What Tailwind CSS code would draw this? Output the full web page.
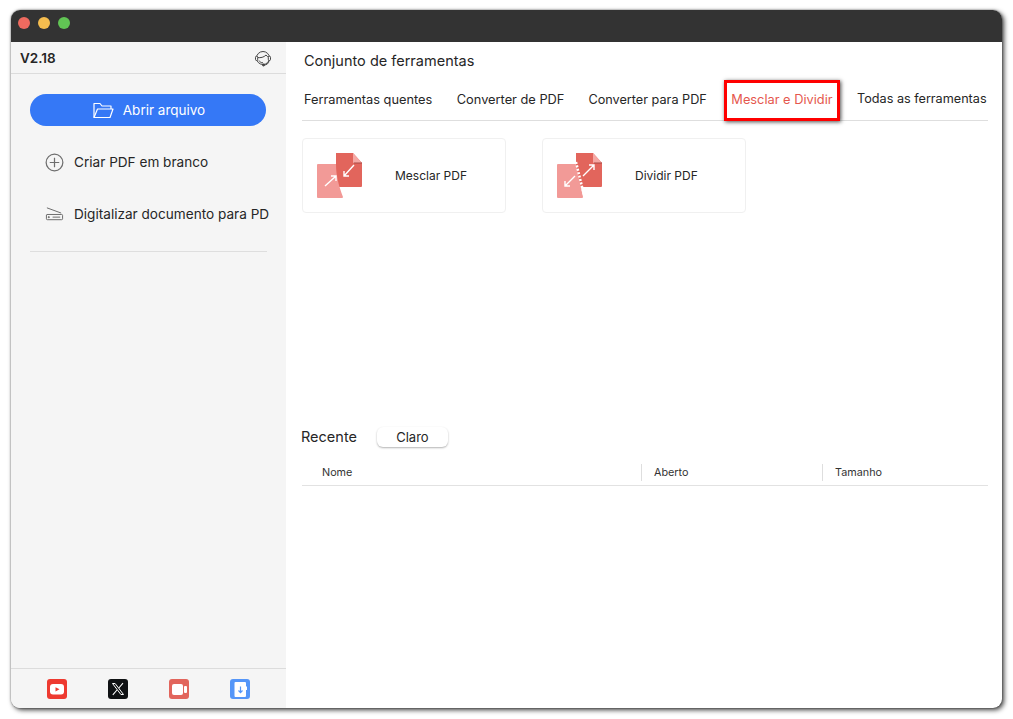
<!DOCTYPE html>
<html lang="pt">
<head>
<meta charset="utf-8">
<title>Conjunto de ferramentas</title>
<script src="https://cdn.jsdelivr.net/npm/@tailwindcss/browser@4"></script>
</head>
<body class="bg-white">
<div class="w-[1013px] h-[719px] pl-[11px] pt-[10px] overflow-hidden font-['Inter','Noto_Sans',sans-serif] text-[#262626]">
  <div class="relative w-[991px] h-[698px] rounded-[9px] bg-white flex flex-col overflow-hidden shadow-[2px_2px_5px_rgba(0,0,0,0.75),0_0_2px_rgba(0,0,0,0.5)]">
    <div class="h-[32px] shrink-0 bg-[#333333] flex items-center gap-[8px] pl-[7px] pb-[6px]">
      <span class="w-[12px] h-[12px] rounded-full bg-[#ee6a5f]"></span>
      <span class="w-[12px] h-[12px] rounded-full bg-[#f5bd4f]"></span>
      <span class="w-[12px] h-[12px] rounded-full bg-[#61c454]"></span>
    </div>
    <div class="flex flex-1 min-h-0">
      <aside class="w-[275px] shrink-0 bg-[#f5f5f5] flex flex-col">
        <div class="h-[32px] shrink-0 border-b border-[#dcdcdc] flex items-center justify-between pl-[9px] pr-[14px] pt-[1px]">
          <span class="text-[13.500px] font-semibold">V2.18</span>
          <svg class="w-[18px] h-[18px] -mt-[1px]" viewBox="0 0 18 18" fill="none" stroke="#444" stroke-width="1"><circle cx="9" cy="9" r="6.500"/><path d="M3.500 8.500c3 .6 6.500-.2 8.500-2.500 .8 1.200 1.800 2 3 2.300"/><path d="M5 11.500c.8 1.500 2.200 2.300 4 2.300"/><rect x="1.500" y="7.200" width="2.200" height="4.300" rx="1.100" fill="#f5f5f5"/><rect x="14.300" y="7.200" width="2.200" height="4.300" rx="1.100" fill="#f5f5f5"/><path d="M15 11.500c0 3-2.500 4.500-5 4.500"/><circle cx="9.500" cy="16" r="1" fill="#444"/></svg>
        </div>
        <div class="px-[19px] pt-[20px]">
          <button class="w-[236px] h-[32px] rounded-full bg-[#3578f6] text-white text-[13.500px] flex items-center justify-center gap-[9px] pl-[2px]">
            <svg class="w-[21px] h-[17px]" viewBox="0 0 21 17" fill="none" stroke="#fff" stroke-width="1.200" stroke-linejoin="round"><path d="M1 15.500V1.500h6l2 2.500h9v3"/><path d="M1 15.500l3.500-8.500H20l-3 8.500z"/></svg>
            <span class="pt-[1px]">Abrir arquivo</span>
          </button>
        </div>
        <div class="mt-[10px] pl-[34px] h-[52px] flex items-center gap-[10px] text-[13.600px]">
          <svg class="w-[19px] h-[19px] shrink-0" viewBox="0 0 20 20" fill="none" stroke="#6e6e6e" stroke-width="1.300"><circle cx="10" cy="10" r="8.800"/><path d="M10 5v10M5 10h10"/></svg>
          <span class="pt-[1px]">Criar PDF em branco</span>
        </div>
        <div class="pl-[34px] h-[52px] flex items-center gap-[10px] text-[13.600px] w-[258px] overflow-hidden whitespace-nowrap">
          <svg class="w-[19px] h-[16px] shrink-0" viewBox="0 0 20 16" fill="none" stroke="#666" stroke-width="1"><path d="M2 1.500l15 5.500"/><path d="M2 8.500h15.500a1 1 0 0 1 1 1V13a1 1 0 0 1-1 1H2.500a1 1 0 0 1-1-1V9a1 1 0 0 1 .5-.5z"/><path d="M8 11.300h8"/><circle cx="4" cy="11.300" r=".6" fill="#666"/></svg>
          <span class="pt-[1px]">Digitalizar documento para PDF</span>
        </div>
        <div class="mx-[19px] mt-[11px] w-[237px] border-t border-[#dedede]"></div>
        <div class="mt-auto h-[40px] border-t border-[#dcdcdc] flex items-start pl-[36px] gap-[41px] pt-[10px]">
          <span class="w-[20px] h-[20px] rounded-[3px] bg-[#ee3a30] flex items-center justify-center">
            <svg class="w-[14px] h-[11px]" viewBox="0 0 14 11"><rect width="14" height="10.500" rx="3" fill="#fff"/><path d="M5.500 3.200l4 2.100-4 2.100z" fill="#ee3a30"/></svg>
          </span>
          <span class="w-[20px] h-[20px] rounded-[3px] bg-[#101214] flex items-center justify-center">
            <svg class="w-[14px] h-[14px]" viewBox="0 0 14 14" fill="none" stroke="#fff"><path d="M1.500 1.500h2.600l8.400 11h-2.600z" stroke-width="1"/><path d="M12 1.200L7.800 6M6 8L1.800 12.800" stroke-width="1.100"/></svg>
          </span>
          <span class="w-[20px] h-[20px] rounded-[3px] bg-[#e2655c] flex items-center justify-center gap-[1px]">
            <span class="w-[11px] h-[11px] rounded-[2px] bg-white"></span>
            <span class="w-[3px] h-[7px] rounded-[1px] bg-white"></span>
          </span>
          <span class="w-[20px] h-[20px] rounded-[3px] bg-[#5596f8] flex items-center justify-center">
            <svg class="w-[13px] h-[15px]" viewBox="0 0 13 15"><path d="M1.500 0H11a1 1 0 0 1 1 1v3.500h1V8h-1v6a1 1 0 0 1-1 1H1.500a1 1 0 0 1-1-1V1a1 1 0 0 1 1-1z" fill="#fff"/><path d="M6.500 4.500v6M4.500 8.500l2 2.200 2-2.200" stroke="#5596f8" stroke-width="1.200" fill="none"/></svg>
          </span>
        </div>
      </aside>
      <main class="flex-1 min-w-0 flex flex-col pl-[16px] pr-[14px]">
        <div class="h-[37px] pl-[2px] flex items-center text-[14.500px]">Conjunto de ferramentas</div>
        <nav class="h-[42px] border-b border-[#dedede] flex items-start pt-[11px] pl-[2px] gap-[24.500px] text-[12.800px] whitespace-nowrap">
          <span>Ferramentas quentes</span>
          <span>Converter de PDF</span>
          <span class="-ml-[0.5px] text-[12.700px]">Converter para PDF</span>
          <span class="text-[#e5574d]">Mesclar e Dividir</span>
          <span class="text-[12.650px]">Todas as ferramentas</span>
        </nav>
        <div class="flex gap-[36px] pt-[17px]">
          <div class="w-[204px] h-[75px] rounded-[4px] border border-[#f0f0f0] flex items-center">
            <svg class="w-[46px] h-[46px] ml-[14px] shrink-0" viewBox="0 0 46 46"><path d="M19 0h17l9 10v23a1 1 0 0 1-1 1H20a1 1 0 0 1-1-1z" fill="#e2655c"/><path d="M36 0l9 10h-8a1 1 0 0 1-1-1z" fill="#f5a8a4"/><path d="M37 9.500h8v1h-8z" fill="#a84a44"/><path d="M1 11h18c0 12 3 22 7 33a1 1 0 0 1-1 1H1a1 1 0 0 1-1-1V12a1 1 0 0 1 1-1z" fill="#f29a97"/><path d="M37 12L27 23M27 18v5h5" stroke="#fff" stroke-width="1.400" fill="none"/><path d="M8 33L19 23M14 23h5v5" stroke="#fff" stroke-width="1.400" fill="none"/></svg>
            <span class="ml-[32px] text-[12px]">Mesclar PDF</span>
          </div>
          <div class="w-[204px] h-[75px] rounded-[4px] border border-[#f0f0f0] flex items-center">
            <svg class="w-[46px] h-[46px] ml-[14px] shrink-0" viewBox="0 0 46 46"><path d="M19 0h17l9 10v23a1 1 0 0 1-1 1H20a1 1 0 0 1-1-1z" fill="#e2655c"/><path d="M36 0l9 10h-8a1 1 0 0 1-1-1z" fill="#f5a8a4"/><path d="M37 9.500h8v1h-8z" fill="#a84a44"/><path d="M1 11h18l7 33a1 1 0 0 1-1 1H1a1 1 0 0 1-1-1V12a1 1 0 0 1 1-1z" fill="#f29a97"/><path d="M19 9l8 33" stroke="#fff" stroke-width="2.500" stroke-dasharray="2 1.500" fill="none"/><path d="M26 23L37 12M32 12h5v5" stroke="#fff" stroke-width="1.400" fill="none"/><path d="M18 23L8 33M8 28v5h5" stroke="#fff" stroke-width="1.400" fill="none"/></svg>
            <span class="ml-[32px] text-[12px]">Dividir PDF</span>
          </div>
        </div>
        <div class="flex items-center mt-[213px] h-[22px] -ml-px">
          <span class="text-[14.500px]">Recente</span>
          <button class="ml-[20px] w-[71px] h-[20px] rounded-[6px] bg-white text-[13px] pt-[1px] shadow-[0_1px_2px_rgba(0,0,0,0.3)]">Claro</button>
        </div>
        <div class="mt-[16px] h-[22px] border-b border-[#e2e2e2] flex items-start text-[10.800px] text-[#333]">
          <div class="w-[340px] h-[17px] pl-[20px] pt-[1px] flex items-center border-r border-[#dedede]">Nome</div>
          <div class="w-[181px] h-[17px] pl-[12px] pt-[1px] flex items-center border-r border-[#dedede]">Aberto</div>
          <div class="pl-[12px] pt-[1px] h-[17px] flex items-center">Tamanho</div>
        </div>
      </main>
    </div>
    <div class="absolute left-[713px] top-[70px] w-[116px] h-[41px] border-[3px] border-[#ff0000] shadow-[1px_1px_4px_rgba(0,0,0,0.7)]"></div>
  </div>
</div>
</body>
</html>
